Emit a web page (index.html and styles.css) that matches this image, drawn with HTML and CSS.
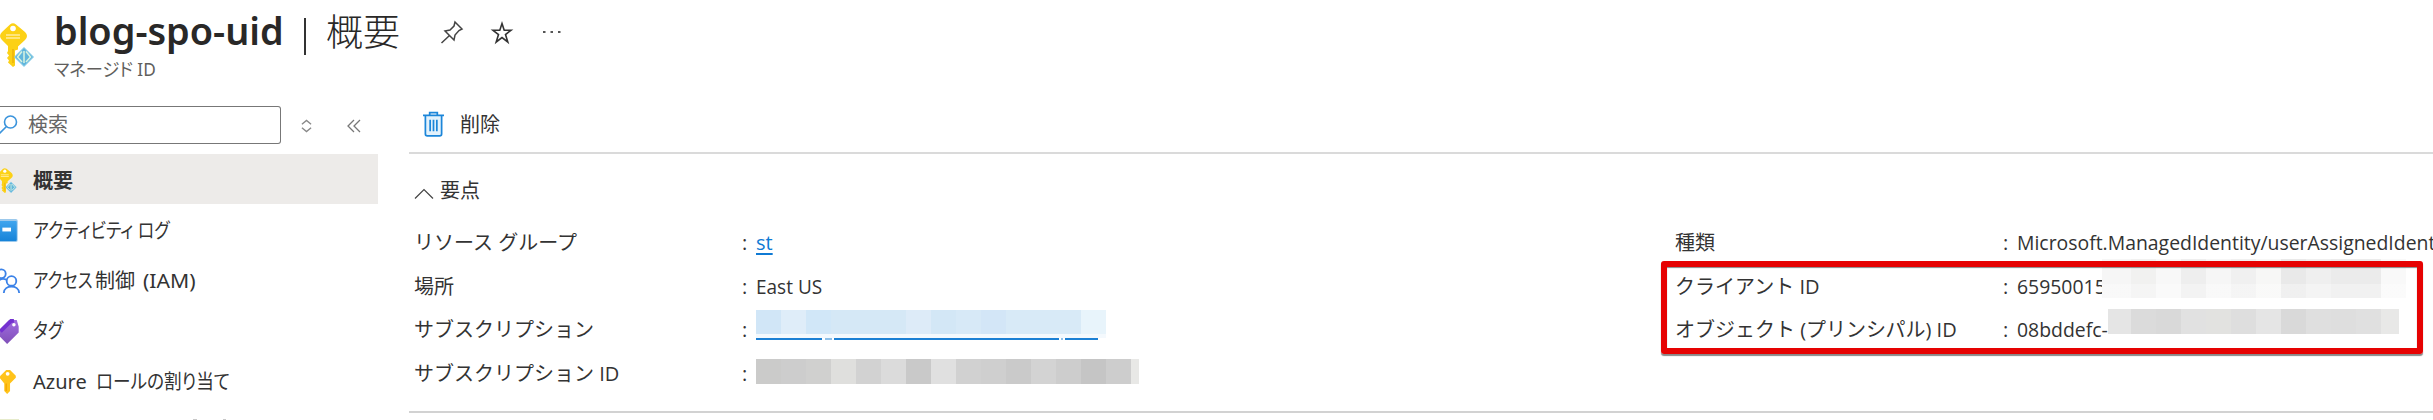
FILE: index.html
```
<!DOCTYPE html>
<html lang="ja">
<head>
<meta charset="utf-8">
<title>blog-spo-uid</title>
<link rel="stylesheet" href="styles.css">
</head>
<body>
<svg class="defs" width="0" height="0" aria-hidden="true">
  <symbol id="key" viewBox="0 0 34 44">
    <path fill="#fcd116" d="m2 9 8-7.500q3-2.500 6 0L25 9q4 4 0 8l-7 6.500v3l-3 1v15L13 44l-5-4.500 1-2-2-2.500 2-2.500-2-2.500 1-2V23L2 17q-4-4 0-8Z"/>
    <circle cx="13" cy="5.500" r="2.800" fill="#fff"/>
    <path d="M6 12h14M6 15h14" stroke="#ffec9c" stroke-width="1.600"/>
    <path d="M13 26v14" stroke="#eeb20b" stroke-width="1.500"/>
    <path fill="#62b6dc" stroke="#8fd0ea" d="M24 24.500 33.500 34 24 43.500 14.500 34Z"/>
    <path d="M24 28v12M22 28.500 17.500 34l4.500 5M26 28.500l4.500 5.500-4.500 5" fill="none" stroke="#d9f3e0" stroke-width="1.500"/>
  </symbol>
</svg>
<div class="page">
  <header class="header">
    <svg class="logo" viewBox="0 0 34 44"><use href="#key"/></svg>
    <div class="titles">
      <div class="title-row">
        <h1 class="title"><span class="name">blog-spo-uid</span><span class="bar"></span><span class="section">概要</span></h1>
        <svg class="pin" viewBox="0 0 22 22" fill="none" stroke="#444" stroke-width="1.500"><path d="m14 1 7 7-3 1.500-4 4.500-1 5-9-9 5-1 4-4ZM8.500 14.500.5 22"/></svg>
        <svg class="star" viewBox="0 0 20 21" fill="none" stroke="#333" stroke-width="1.600"><path d="m10 1.500 2.200 6.800h6.800l-5.500 4.200 2.300 7.500-5.800-4.500L4.200 20l2.300-7.500L1 8.300h6.800Z"/></svg>
        <svg class="dots" viewBox="0 0 18 4" fill="#555"><path d="M0 1h2.500v2H0zM7.500 1H10v2H7.500zM15 1h2.500v2H15z"/></svg>
      </div>
      <div class="subtitle"><span class="t">マネージド ID</span></div>
    </div>
  </header>
  <div class="body">
    <nav class="side">
      <div class="search-row">
        <div class="search">
          <svg class="glass" viewBox="0 0 18 20" fill="none" stroke="#3b94dc" stroke-width="1.600"><circle cx="10.500" cy="7" r="6"/><path d="m6.500 11.500-7 7"/></svg>
          <span>検索</span>
        </div>
        <svg class="updown" viewBox="0 0 12 14" fill="none" stroke="#888" stroke-width="1.500"><path d="m1 5 5-4 5 4M1 9l5 4 5-4"/></svg>
        <svg class="collapse" viewBox="0 0 14 14" fill="none" stroke="#777" stroke-width="1.300"><path d="M7 1 1 7l6 6M13 1 7 7l6 6"/></svg>
      </div>
      <ul class="menu">
        <li class="item active"><svg class="ic i-key" viewBox="5 0 29 44"><use href="#key" width="34" height="44"/></svg><span class="t">概要</span></li>
        <li class="item"><svg class="ic" viewBox="0 0 22 26"><defs><linearGradient id="b" x2="0" y2="1"><stop stop-color="#3fa5ee"/><stop offset="1" stop-color="#1683d8"/></linearGradient></defs><rect x="-4" y="1" width="22" height="24" rx="2" fill="#9cc9ec"/><rect x="-4" y="3" width="21" height="21" rx="1" fill="url(#b)"/><path d="M2 10h9v4H2z" fill="#fff"/></svg><span class="t kana">アクティビティ ログ</span></li>
        <li class="item"><svg class="ic" viewBox="0 0 22 26" fill="none" stroke="#3b82e8" stroke-width="1.900"><circle cx="1" cy="6" r="4.500"/><circle cx="11.500" cy="13.500" r="5"/><path d="M3.500 26c0-9 16-9 16 0M-3 14q4-4 9-2"/></svg><span class="t access">アクセス</span><span class="t">制御</span><span class="t iam">(IAM)</span></li>
        <li class="item"><svg class="ic" viewBox="0 0 22 26"><defs><linearGradient id="p" x2="0" y2="1"><stop stop-color="#a06be0"/><stop offset="1" stop-color="#8050b8"/></linearGradient></defs><path fill="url(#p)" d="M9 1h8l2 7v6L7 26l-9-9v-5Z"/><path d="M0 13 11 2h3" stroke="#7431d0" stroke-width="4" fill="none"/><circle cx="14" cy="6" r="1.800" fill="#fff"/></svg><span class="t kana">タグ</span></li>
        <li class="item"><svg class="ic" viewBox="0 0 22 26"><path fill="#ffc31a" d="M0 7 6 1h4l6 6v2l-6 6v8l-3 3-3-3v-8L-1 9Z"/><circle cx="7.500" cy="5" r="2" fill="#fff"/><path d="M6 15v8" stroke="#f5a800" stroke-width="1.500"/></svg><span class="t azure">Azure</span><span class="t roles">ロールの割り当て</span></li>
        <li class="item next"><svg viewBox="0 0 240 2"><path fill="#e6ebcb" d="M0 0h19v2H0z"/><path fill="#c8c8c8" d="M193 0h4v2h-4zM223 0h3v2h-3z"/></svg></li>
      </ul>
    </nav>
    <main class="main">
      <div class="toolbar">
        <svg class="trash" viewBox="0 0 22 27" fill="none" stroke="#1c86d9" stroke-width="1.800"><path fill="#e3f2fc" d="M2.500 5v19q0 2 2 2h13q2 0 2-2V5"/><path d="M0 4.500h22M7 4V1.500h8V4M7.500 9v12M11 9v12M14.500 9v12"/></svg>
        <span>削除</span>
      </div>
      <section class="essentials">
        <div class="ess-head"><svg class="chev" viewBox="0 0 20 11" fill="none" stroke="#444" stroke-width="1.200"><path d="m1 10.500 9-9 9 9"/></svg><span>要点</span></div>
        <div class="cols">
          <dl class="props">
            <dt>リソース グループ</dt><dd><i>:</i><a class="link">st</a></dd>
            <dt>場所</dt><dd><i>:</i><span class="t east">East US</span></dd>
            <dt>サブスクリプション</dt><dd><i>:</i><span class="masked blue"></span></dd>
            <dt>サブスクリプション ID</dt><dd><i>:</i><span class="masked gray"></span></dd>
          </dl>
          <dl class="props">
            <dt>種類</dt><dd><i>:</i><span class="t val">Microsoft.ManagedIdentity/userAssignedIdent</span></dd>
            <dt>クライアント ID</dt><dd><i>:</i><span class="t val">65950015</span></dd>
            <dt>オブジェクト (プリンシパル) ID</dt><dd><i>:</i><span class="t val">08bddefc-</span></dd>
          </dl>
        </div>
      </section>
    </main>
  </div>
  <div class="mask-a"></div>
  <div class="mask-b"></div>
  <div class="callout"></div>
</div>
</body>
</html>
```
FILE: styles.css
```
* { box-sizing: border-box; margin: 0; padding: 0; }
body { width: 2433px; height: 420px; overflow: hidden; background: #fff; color: #333; font: 20px/44px "Open Sans", "Noto Sans CJK JP", sans-serif; }
.defs { position: absolute; }
svg { flex: none; overflow: visible; }
.page { position: relative; height: 420px; overflow: hidden; }
.t { display: inline-block; white-space: nowrap; transform-origin: 0 50%; font-feature-settings: "palt"; }
.header { display: flex; height: 98px; }
.logo { width: 34px; height: 44px; margin-top: 23px; }
.titles { padding-left: 20px; }
.title-row { display: flex; align-items: center; height: 64px; }
.title { display: flex; align-items: center; width: 387px; font: 400 37px/60px "Noto Sans", "Noto Sans CJK JP", sans-serif; color: #292827; white-space: nowrap; }
.name { width: 249px; font-weight: 600; transform: scaleX(1.022); transform-origin: 0 50%; margin-top: -3px; }
.bar { width: 2px; height: 37px; background: #333; margin: 8px 20px 0 1px; }
.section { font-family: "Noto Sans CJK JP", sans-serif; font-weight: 300; margin-top: -4px; }
.pin { width: 22px; height: 22px; }
.star { width: 20px; height: 21px; margin-left: 29px; }
.dots { width: 18px; height: 4px; margin-left: 31px; }
.subtitle { margin-top: -9px; font: 18px/28px "Noto Sans", "Noto Sans CJK JP", sans-serif; color: #605e5c; }
.subtitle .t { transform: scaleX(.955); }
.body { display: flex; }
.side { width: 409px; height: 322px; flex: none; font-family: "Noto Sans", "Noto Sans CJK JP", sans-serif; }
.search-row { display: flex; align-items: center; height: 56px; }
.search { display: flex; align-items: center; width: 281px; height: 38px; border: 1.500px solid #777; border-left: 0; border-radius: 0 3px 3px 0; margin-top: -3px; color: #666; }
.glass { width: 18px; height: 20px; margin-right: 10px; }
.updown { width: 11px; height: 14px; margin-left: 20px; }
.collapse { width: 14px; height: 14px; margin-left: 35px; }
.menu { list-style: none; }
.item { display: flex; align-items: center; width: 378px; height: 50.400px; padding-top: 2px; white-space: nowrap; }
.active { background: #edebe9; font-weight: 600; padding-top: 3px; }
.next { align-items: flex-start; padding-top: 13px; }
.next svg { width: 240px; height: 2px; }
.ic { width: 22px; height: 25px; margin-right: 11px; }
.i-key { width: 17px; margin-right: 16px; }
.kana { transform: scaleX(.845); }
.access { width: 62px; transform: scaleX(.82); }
.iam { margin-left: 8px; transform: scaleX(1.060); }
.azure { width: 63px; }
.roles { transform: scaleX(.88); }
.main { flex: 1; min-width: 0; }
.toolbar { display: flex; align-items: center; height: 56px; padding-left: 14px; border-bottom: 2px solid #dadada; }
.trash { width: 21px; height: 26px; margin: -3px 16px 0 0; }
.essentials { height: 259px; border-bottom: 2px solid #d2d2d2; padding: 15px 0 0 5px; }
.ess-head { display: flex; align-items: center; height: 44px; }
.chev { width: 20px; height: 11px; margin: 4px 6px 0 0; }
.cols { display: grid; grid-template-columns: 1261px 758px; padding-top: 8px; }
.props { display: grid; grid-template-columns: 328px 1fr; grid-auto-rows: 43.700px; align-content: start; }
.props dt { white-space: nowrap; }
.props dd { display: flex; white-space: nowrap; }
.props i { width: 14px; font-style: normal; }
.link { color: #0f7ad4; text-decoration: underline; text-underline-offset: 3px; }
.east { transform: scaleX(.95); }
.val { transform: scaleX(.97); }
.masked { display: block; }
.blue { width: 350px; height: 24px; margin-top: 2px; background: linear-gradient(90deg, #d1e6f7 25px, #dfedf9 25px 50px, #d1e7f8 50px 75px, #d5e8f6 75px 150px, #ddebf8 150px 175px, #d3e7f6 175px 200px, #d7e9f7 200px 225px, #d3e6f7 225px 250px, #d8eaf7 250px 325px, #e8f4fb 325px); box-shadow: 0 4px 0 #f4f9fd; }
.gray { width: 383px; height: 25px; margin-top: 7px; background: linear-gradient(90deg, #cbcbca 25px, #cdcdcd 25px 50px, #d0d0cf 50px 75px, #dfdfdd 75px 100px, #d2d2d2 100px 125px, #dbdbdb 125px 150px, #c9c9c9 150px 175px, #e0e0e0 175px 200px, #d1d1d1 200px 225px, #cfcfcf 225px 250px, #cacaca 250px 275px, #d3d3d3 275px 300px, #cdcdcd 300px 325px, #c5c5c5 325px 350px, #cdcdcd 350px 375px, #e8e8e6 375px); }
.blue::after { content: ""; display: block; width: 342px; height: 2px; transform: translateY(28px); background: linear-gradient(90deg, #1c80d4 66px, #fff 66px 69px, #8fc0e8 69px 76px, #fff 76px 78px, #1c80d4 78px 303px, #fff 303px 305px, #8fc0e8 305px 307px, #fff 307px 309px, #1c80d4 309px); }
.callout { position: absolute; left: 1661px; top: 261px; width: 762px; height: 93px; border: 6px solid #e60202; border-radius: 3px; box-shadow: 0 2px 1px #888, inset 0 1px 1px #888; }
.mask-a { position: absolute; left: 2102px; top: 259px; width: 304px; height: 39px; background: linear-gradient(#fff0 25px, #ffffff50 25px), linear-gradient(90deg, #f6f6f6 29px, #f1f1f0 29px 54px, #f8f8f8 54px 79px, #eee 79px 104px, #f6f6f6 104px 129px, #f0f0f0 129px 154px, #f7f7f6 154px 179px, #e9e9e9 179px 204px, #efefef 204px 229px, #ebebeb 229px 279px, #f9f9f9 279px); }
.mask-b { position: absolute; left: 2108px; top: 309px; width: 291px; height: 25px; background: linear-gradient(90deg, #e5e5e5 23px, #dbdbdb 23px 48px, #d9d9d9 48px 73px, #e1e1e1 73px 98px, #e2e2e0 98px 123px, #dedede 123px 148px, #e5e5e5 148px 173px, #d9d9d9 173px 198px, #dfdfdf 198px 223px, #dedede 223px 248px, #e0e0e0 248px 273px, #e8e8e7 273px); }
```
